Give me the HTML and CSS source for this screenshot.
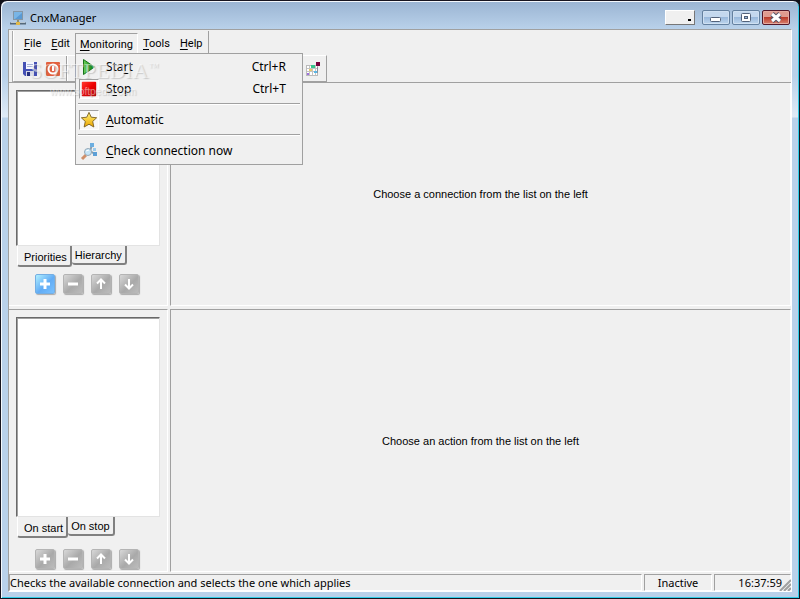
FILE: index.html
```html
<!DOCTYPE html>
<html lang="en">
<head>
  <meta charset="UTF-8" />
  <meta name="viewport" content="width=device-width, initial-scale=1.0" />
  <title>CnxManager</title>
  <link rel="stylesheet" href="styles.css">
</head>
<body>

  <!-- shared drawings -->
  <svg class="defs" width="0" height="0" aria-hidden="true">
    <defs>
      <linearGradient id="green" x1="0" x2="1"><stop offset="0" stop-color="#6fd05a"/><stop offset=".5" stop-color="#2fa32c"/><stop offset="1" stop-color="#087d10"/></linearGradient>
      <linearGradient id="gold" x1="0" x2="0" y1="0" y2="1"><stop offset="0" stop-color="#fff27a"/><stop offset="1" stop-color="#eda700"/></linearGradient>
      <linearGradient id="red" x1="0" x2="1" y1="0" y2="1"><stop offset="0" stop-color="#ff3a30"/><stop offset=".5" stop-color="#ee0000"/><stop offset="1" stop-color="#b80000"/></linearGradient>
      <symbol id="plus" viewBox="0 0 20 20"><path d="M5 10h10M10 5v10" stroke="#fff" stroke-width="3"/></symbol>
      <symbol id="minus" viewBox="0 0 20 20"><path d="M5 10h10" stroke="#fff" stroke-width="3"/></symbol>
      <symbol id="up" viewBox="0 0 20 20"><path d="M10 15V6M6 9.500l4-4 4 4" fill="none" stroke="#fff" stroke-width="2"/></symbol>
      <symbol id="down" viewBox="0 0 20 20"><path d="M10 5v9M6 10.500l4 4 4-4" fill="none" stroke="#fff" stroke-width="2"/></symbol>
    </defs>
  </svg>

  <div class="window">
    <header class="titlebar">
      <svg class="app-icon" width="16" height="16" viewBox="0 0 16 16">
        <rect x="3.500" y="1.500" width="9" height="8" fill="#79b5e6" stroke="#8496a6"/>
        <path d="M5 9l7-6v6z" fill="#5a9ad4"/>
        <path d="M8 10v3" stroke="#8d8d70" stroke-width="2"/>
        <path d="M0 13.500h16" stroke="#56697a" stroke-width="2"/>
        <path d="M1 12.500h5M10 12.500h5" stroke="#b9c7d3"/>
        <rect x="6" y="12" width="4" height="3" fill="#e1b94a"/>
      </svg>
      <h1>CnxManager</h1>
      <button class="tray-btn" aria-label="Minimize to tray"><span></span></button>
      <button class="win-btn" aria-label="Minimize">
        <svg width="26" height="13" viewBox="0 0 26 13"><rect x="7.500" y="6.500" width="10" height="4" rx="1" fill="#fff" stroke="#53627a"/></svg>
      </button>
      <button class="win-btn" aria-label="Maximize">
        <svg width="26" height="13" viewBox="0 0 26 13"><rect x="8.500" y="2.500" width="9" height="8" rx="1" fill="#fff" stroke="#53627a"/><rect x="11.500" y="5.500" width="3" height="2" fill="#9bb8da" stroke="#53627a"/></svg>
      </button>
      <button class="win-btn close" aria-label="Close">
        <svg width="26" height="13" viewBox="0 0 26 13"><path d="M9 3l8 7M17 3l-8 7" stroke="#535166" stroke-width="5"/><path d="M9 3l8 7M17 3l-8 7" stroke="#fff" stroke-width="3"/></svg>
      </button>
    </header>

    <div class="client">
      <nav class="menubar">
        <button class="menu"><u>F</u>ile</button>
        <button class="menu"><u>E</u>dit</button>
        <div class="menu-open">
          <button class="menu active"><u>M</u>onitoring</button>
          <div class="popup" role="menu">
            <button class="item" role="menuitem">
              <svg width="20" height="20" viewBox="0 0 20 20"><path d="M4.500 2.500v15l11-7.500z" fill="url(#green)" stroke="#17741b"/></svg>
              <span>Sta<u>r</u>t</span><kbd>Ctrl+R</kbd>
            </button>
            <button class="item" role="menuitem">
              <svg class="checked" width="20" height="20" viewBox="0 0 20 20"><rect x="2" y="2" width="16" height="16" rx="1" fill="url(#red)"/></svg>
              <span>S<u>t</u>op</span><kbd>Ctrl+T</kbd>
            </button>
            <hr>
            <button class="item" role="menuitem">
              <svg class="checked" width="20" height="20" viewBox="0 0 20 20"><path d="M10 1.500l2.500 5.400 6 .6-4.400 4.100 1.300 6.200-5.400-3.100L4.600 17.800l1.300-6.200L1.500 7.500l6-.6z" fill="url(#gold)" stroke="#796022" stroke-linejoin="round"/></svg>
              <span><u>A</u>utomatic</span>
            </button>
            <hr>
            <button class="item" role="menuitem">
              <svg width="20" height="20" viewBox="0 0 20 20"><path d="M7 14L3 18" stroke="#cf8f6a" stroke-width="3"/><path d="M13 4l-2 6 5 3" fill="none" stroke="#879cac" stroke-width="2"/><rect x="11" y="2" width="4" height="4" fill="#6caee0"/><rect x="14" y="11" width="4" height="4" fill="#5c9fd6"/><rect x="14" y="7" width="3" height="3" fill="#9ccbec"/><circle cx="9" cy="11" r="3.500" fill="#c5e5f8" stroke="#94a8b6"/><path d="M7 10l3-1" stroke="#fff"/></svg>
              <span><u>C</u>heck connection now</span>
            </button>
          </div>
        </div>
        <button class="menu"><u>T</u>ools</button>
        <button class="menu"><u>H</u>elp</button>
      </nav>

      <div class="toolbar">
        <button class="tool" aria-label="Save">
          <svg width="16" height="16" viewBox="0 0 16 16"><path d="M1 1h14v14H3l-2-2z" fill="#4450b4"/><rect x="4" y="1" width="8" height="7" fill="#f4f6ff"/><path d="M5 3.500h6M5 5.500h6" stroke="#a7b0d5"/><rect x="4" y="10" width="8" height="5" fill="#d4d7e5"/><rect x="5" y="11" width="3" height="4" fill="#27317f"/></svg>
        </button>
        <button class="tool" aria-label="Exit">
          <svg width="16" height="16" viewBox="0 0 16 16"><rect x="1" y="1" width="14" height="14" rx="1" fill="#e2603e"/><circle cx="8" cy="8" r="4.500" fill="none" stroke="#fff" stroke-width="2"/><path d="M8 5v5" stroke="#fff" stroke-width="2"/></svg>
        </button>
        <span class="tool-sep"></span>
        <button class="tool last" aria-label="Options">
          <svg width="16" height="16" viewBox="0 0 16 16"><rect x="1.500" y="4.500" width="11" height="10" fill="#fff" stroke="#bbb"/><path d="M4.500 5v9M7.500 5v9M10.500 5v9M2 7.500h10M2 10.500h10" stroke="#c3c3c3"/><rect x="6" y="4" width="4" height="3" fill="#35c58c"/><rect x="4" y="8" width="3" height="2" fill="#eac967"/><rect x="9" y="10" width="3" height="2" fill="#5bb8e5"/><rect x="2" y="12" width="2" height="2" fill="#9e70dc"/><path d="M12.500 6v6" stroke="#8a929c"/><rect x="11" y="1" width="4" height="4" fill="#76003b"/></svg>
        </button>
      </div>

      <main class="panes">
        <section class="side">
          <div class="list" role="listbox" aria-label="Connections"></div>
          <div class="tabs" role="tablist">
            <button class="tab selected" role="tab">Priorities</button>
            <button class="tab" role="tab">Hierarchy</button>
          </div>
          <div class="actions">
            <button class="act blue" aria-label="Add connection"><svg width="20" height="20"><use href="#plus"/></svg></button>
            <button class="act" aria-label="Remove connection"><svg width="20" height="20"><use href="#minus"/></svg></button>
            <button class="act" aria-label="Move connection up"><svg width="20" height="20"><use href="#up"/></svg></button>
            <button class="act" aria-label="Move connection down"><svg width="20" height="20"><use href="#down"/></svg></button>
          </div>
        </section>
        <section class="detail"><p>Choose a connection from the list on the left</p></section>

        <section class="side lower">
          <div class="list" role="listbox" aria-label="Actions"></div>
          <div class="tabs" role="tablist">
            <button class="tab selected" role="tab">On start</button>
            <button class="tab" role="tab">On stop</button>
          </div>
          <div class="actions">
            <button class="act" aria-label="Add action"><svg width="20" height="20"><use href="#plus"/></svg></button>
            <button class="act" aria-label="Remove action"><svg width="20" height="20"><use href="#minus"/></svg></button>
            <button class="act" aria-label="Move action up"><svg width="20" height="20"><use href="#up"/></svg></button>
            <button class="act" aria-label="Move action down"><svg width="20" height="20"><use href="#down"/></svg></button>
          </div>
        </section>
        <section class="detail"><p>Choose an action from the list on the left</p></section>
      </main>

      <footer class="statusbar">
        <span class="hint">Checks the available connection and selects the one which applies</span>
        <span class="state">Inactive</span>
        <span class="clock">16:37:59</span>
        <svg class="grip" width="12" height="12" viewBox="0 0 12 12"><path d="M1 12L12 1M5 12l7-7M9 12l3-3" stroke="#a0a0a0" stroke-width="2"/></svg>
      </footer>
    </div>

    <div class="watermark" aria-hidden="true">
      <span class="mark">SOFTPEDIA<sup>™</sup></span>
      <span class="site">www.softpedia.com</span>
    </div>
  </div>

</body>
</html>
```

FILE: styles.css
```css
* {
  box-sizing: border-box;
}

body {
  margin: 0;
  background: #101018;
  font-family: "Noto Sans", Tahoma, sans-serif;
  font-size: 11px;
  line-height: 14px;
  color: #000;
}

button {
  margin: 0;
  padding: 0;
  border: none;
  background: none;
  color: inherit;
  font: inherit;
}

svg {
  display: block;
}

.defs {
  position: absolute;
}

.window {
  position: relative;
  display: flex;
  flex-direction: column;
  height: 100vh;
  padding: 0 7px 6px;
  border: 1px solid #17141f;
  border-radius: 7px 7px 0 0;
  background: linear-gradient(#9ab4d2, #b9d1ea 28px, #b9d1ea 75px, #dfeaf6 116px, #b9d1ea 117px);
  box-shadow: inset 1px 1px #f4f8fc, inset -1px -1px #30cde8;
}

/* title bar */
.titlebar {
  display: flex;
  flex: none;
  align-items: center;
  height: 28px;
  padding: 5px 2px 0;
}

.titlebar h1 {
  flex: 1;
  margin: 0 0 0 4px;
  font-size: 11px;
  font-weight: normal;
}

.tray-btn {
  display: flex;
  align-items: flex-end;
  justify-content: flex-end;
  width: 30px;
  height: 15px;
  margin-right: 5px;
  padding: 3px;
  border: 1px solid;
  border-color: #fff #777 #777 #fff;
  background: #f0f0f0;
}

.tray-btn span {
  width: 3px;
  height: 2px;
  background: #000;
}

.win-btn {
  width: 28px;
  height: 15px;
  margin-left: 2px;
  border: 1px solid #64809f;
  border-radius: 2px;
  background: linear-gradient(#c4d8ee 45%, #9ab9dc 50%, #bfd6ee);
  box-shadow: inset 0 0 0 1px #cfe0f2;
}

.close {
  border-color: #53172a;
  background: linear-gradient(#e09b90 45%, #bb3c2c 50%, #d88271);
  box-shadow: inset 0 0 0 1px #e6aaa0;
}

/* menu bar */
.client {
  display: flex;
  flex: 1;
  flex-direction: column;
  min-height: 0;
  border: 1px solid #a0a0a0;
  border-color: #a0a0a0 #fff #fff #a0a0a0;
  background: #f0f0f0;
}

.menubar,
.toolbar {
  position: relative;
  display: flex;
  flex: none;
  align-self: flex-start;
  margin-left: 3px;
  border-left: 2px groove #fff;
  border-right: 1px solid #a0a0a0;
}

.menubar {
  height: 24px;
  margin-top: 1px;
  padding: 2px 1px 0 5px;
  font-family: Roboto, Tahoma, sans-serif;
}

.menu {
  height: 22px;
  padding: 0 5px;
}

.menu-open {
  position: relative;
}

.menu.active {
  padding: 2px 4px 0;
  border: 1px solid;
  border-color: #a0a0a0 #fff #f0f0f0 #a0a0a0;
}

u {
  text-underline-offset: 2px;
}

.popup {
  position: absolute;
  z-index: 2;
  top: 20px;
  left: 0;
  width: 228px;
  padding: 2px;
  border: 1px solid #a0a0a0;
  background: #f0f0f0;
}

.item {
  display: flex;
  align-items: center;
  width: 100%;
  height: 22px;
  padding: 0 14px 0 1px;
  font-family: "Noto Sans", Tahoma, sans-serif;
  font-size: 12px;
  text-align: left;
}

.item span {
  flex: 1;
  margin-left: 7px;
}

.item kbd {
  font: inherit;
}

.checked {
  border: 1px solid;
  border-color: #a0a0a0 #fff #fff #a0a0a0;
  background: #f8f8f8;
}

.popup hr {
  height: 2px;
  margin: 3px 0 4px;
  border: none;
  border-top: 1px solid #a0a0a0;
  border-bottom: 1px solid #fff;
}

/* toolbar */
.toolbar {
  width: 315px;
  height: 27px;
  padding-left: 5px;
  border-top: 1px solid #fff;
  border-bottom: 1px solid #a0a0a0;
}

.tool {
  width: 23px;
  padding-left: 3px;
}

.tool-sep {
  width: 2px;
  margin: 0 1px;
  border-left: 1px solid #a0a0a0;
  border-right: 1px solid #fff;
}

.tool.last {
  margin-left: auto;
  padding-left: 2px;
}

/* panes */
.panes {
  display: grid;
  flex: 1;
  grid-template-columns: 159px 1fr;
  grid-template-rows: 223px 1fr;
  gap: 3px 2px;
  min-height: 0;
  border-top: 1px solid #a0a0a0;
}

.side,
.detail {
  border: 1px solid;
  border-color: #a0a0a0 #fff #fff #a0a0a0;
}

.side {
  display: flex;
  flex-direction: column;
  padding: 7px 7px 11px;
  border-left: none;
}

.side.lower {
  padding-bottom: 2px;
}

.side:first-child,
.detail:nth-child(2) {
  border-top: none;
}

.list {
  flex: 1;
  border: 1px solid;
  border-color: #696969 #e3e3e3 #e3e3e3 #696969;
  background: #fff;
  box-shadow: inset 1px 1px #a0a0a0;
}

.tabs {
  display: flex;
  align-items: flex-start;
  height: 28px;
  padding-left: 1px;
  font-family: "Liberation Sans", Arial, sans-serif;
}

.lower .tabs {
  height: 32px;
}

.tab {
  height: 19px;
  padding: 1px 3px 0;
  border: solid #808080;
  border-width: 0 2px 2px 0;
  border-radius: 0 0 3px 3px;
}

.tab.selected {
  height: 21px;
  padding: 3px 3px 0 6px;
  border-left: 1px solid #fff;
}

.actions {
  display: flex;
  gap: 8px;
  padding-left: 19px;
}

.act {
  width: 20px;
  height: 20px;
  border: 1px solid #b4b4b4;
  border-radius: 2px;
  background: linear-gradient(135deg, #d8d8d8, #a9a9a9 55%, #bcbcbc);
  box-shadow: 1px 1px 1px #aaa;
}

.act svg {
  margin: -1px;
}

.act.blue {
  border-color: #74aee3;
  background: linear-gradient(135deg, #b0f0ff, #62acf5 55%, #78c1ff);
}

.detail {
  display: flex;
  align-items: center;
  justify-content: center;
  font-family: "Liberation Sans", Arial, sans-serif;
}

.detail p {
  margin: 0;
}

/* status bar */
.statusbar {
  position: relative;
  display: flex;
  flex: none;
  gap: 2px;
  height: 19px;
  padding-top: 2px;
}

.statusbar span {
  padding: 1px 1px 0;
  border: 1px solid;
  border-color: #a0a0a0 #fff #fff #a0a0a0;
  white-space: nowrap;
}

.statusbar .hint {
  flex: 1;
  padding-left: 0;
}

.state {
  width: 68px;
  text-align: center;
}

.statusbar .clock {
  width: 77px;
  padding-right: 8px;
  text-align: right;
}

.grip {
  position: absolute;
  right: 0;
  bottom: 0;
}

/* translucent stamp over the window */
.watermark {
  position: absolute;
  z-index: 3;
  top: 56px;
  left: 29px;
  display: flex;
  flex-direction: column;
  font-family: "Liberation Serif", serif;
  color: rgba(255, 255, 255, .5);
  text-shadow: 1px 1px 1px rgba(110, 110, 110, .3);
  pointer-events: none;
}

.mark {
  font-size: 22px;
  line-height: 28px;
}

.mark sup {
  font-size: 10px;
  line-height: 10px;
}

.site {
  padding-left: 20px;
  font-family: "Liberation Sans", sans-serif;
  font-size: 10px;
}
```
